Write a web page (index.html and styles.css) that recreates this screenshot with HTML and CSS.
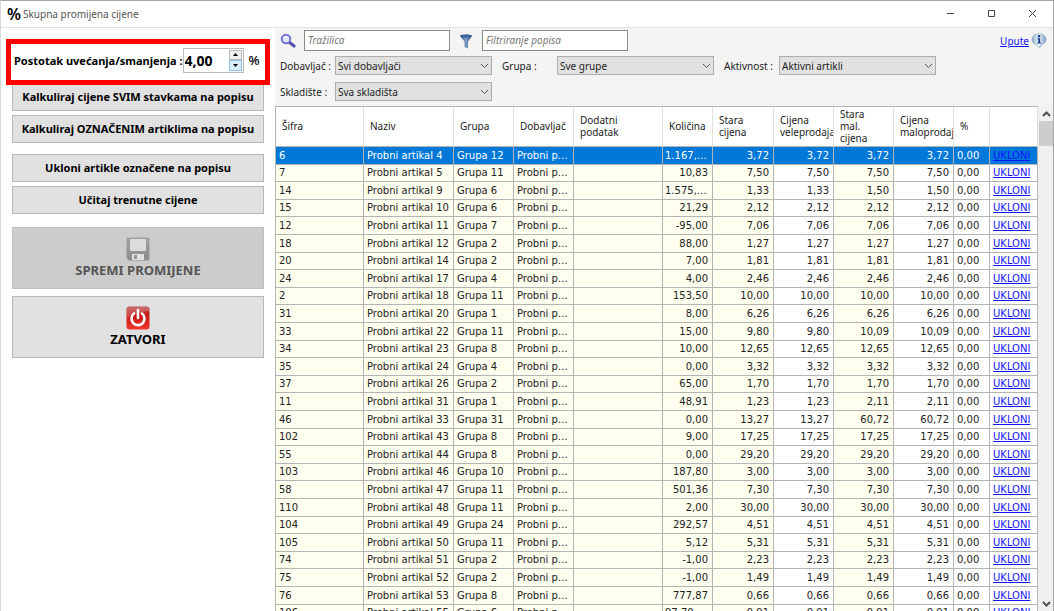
FILE: index.html
```
<!DOCTYPE html>
<html lang="hr">
<head>
  <meta charset="UTF-8" />
  <meta name="viewport" content="width=device-width, initial-scale=1.0"/>
  <title>Skupna promijena cijene</title>
  <link rel="stylesheet" href="styles.css">
</head>
<body>

  <header class="titlebar">
    <span class="app-icon">%</span>
    <h1>Skupna promijena cijene</h1>
    <div class="window-buttons">
      <button type="button" aria-label="Minimiziraj"><svg width="9" height="9" viewBox="0 0 9 9"><path d="M1 4.500h7"/></svg></button>
      <button type="button" aria-label="Maksimiziraj"><svg width="9" height="9" viewBox="0 0 9 9"><path d="M1.500 1.500h6v6h-6z"/></svg></button>
      <button type="button" aria-label="Zatvori prozor"><svg width="9" height="9" viewBox="0 0 9 9"><path d="M1 1l7 7M8 1l-7 7"/></svg></button>
    </div>
  </header>

  <div class="layout">
    <!-- Actions -->
    <aside class="sidebar">
      <div class="percent">
        <label for="percent">Postotak uvećanja/smanjenja :</label>
        <div class="spinner">
          <input id="percent" type="text" value="4,00" />
          <div class="spin-buttons">
            <button type="button" id="up" aria-label="Povećaj"><svg width="5" height="3" viewBox="0 0 5 3"><path d="M0 3l2.500-3L5 3z"/></svg></button>
            <button type="button" id="down" class="active" aria-label="Smanji"><svg width="5" height="3" viewBox="0 0 5 3"><path d="M0 0l2.500 3L5 0z"/></svg></button>
          </div>
        </div>
        <span class="unit">%</span>
      </div>

      <div class="actions">
        <button type="button" class="btn">Kalkuliraj cijene SVIM stavkama na popisu</button>
        <button type="button" class="btn">Kalkuliraj OZNAČENIM artiklima na popisu</button>
      </div>
      <div class="actions">
        <button type="button" class="btn">Ukloni artikle označene na popisu</button>
        <button type="button" class="btn">Učitaj trenutne cijene</button>
      </div>
      <div class="actions actions-large">
        <button type="button" class="btn btn-large" disabled>
          <svg width="24" height="24" viewBox="0 0 24 24">
            <defs>
              <linearGradient id="disk" x1="0" y1="0" x2="0" y2="1">
                <stop offset="0" stop-color="#a2a2a2"/><stop offset="1" stop-color="#8c8c8c"/>
              </linearGradient>
            </defs>
            <path d="M2 .5h20q1.500 0 1.500 1.500v20q0 1.500-1.500 1.500H3L.5 21V2Q.5.5 2 .5z" fill="url(#disk)"/>
            <path d="M4 2h16v11q0 1-1 1H5q-1 0-1-1z" fill="#dcdcdc"/>
            <path d="M6 17h12v6H6z" fill="#e0e0e0"/>
            <path d="M8 18h3v4H8z" fill="#969696"/>
          </svg>
          SPREMI PROMIJENE
        </button>
        <button type="button" class="btn btn-large">
          <svg width="24" height="24" viewBox="0 0 24 24">
            <defs>
              <linearGradient id="power" x1="0" y1="0" x2="0" y2="1">
                <stop offset="0" stop-color="#b84a4a"/><stop offset=".4" stop-color="#c81414"/><stop offset="1" stop-color="#f03a2c"/>
              </linearGradient>
            </defs>
            <rect x=".5" y=".5" width="23" height="23" rx="3" fill="url(#power)"/>
            <path d="M1 9V3q0-2 2-2h18q2 0 2 2v2Q14 5 1 12z" fill="#fff" opacity=".2"/>
            <path d="M8 7.500a6.500 6.500 0 1 0 8 0" fill="none" stroke="#fff" stroke-width="2.600" stroke-linecap="round"/>
            <path d="M12 4v8" stroke="#fff" stroke-width="2.600" stroke-linecap="round"/>
          </svg>
          ZATVORI
        </button>
      </div>
    </aside>

    <main class="content">
      <!-- Search and filters -->
      <div class="search-row">
        <svg width="16" height="16" viewBox="0 0 16 16">
          <path d="M9 9l5 4" stroke="#5553b4" stroke-width="3.200" stroke-linecap="round"/>
          <circle cx="6" cy="6" r="4.300" fill="#dfe6ff" stroke="#7472d2" stroke-width="2"/>
          <path d="M4 5.500Q4.500 4 6.500 4" fill="none" stroke="#fff"/>
        </svg>
        <input type="text" placeholder="Tražilica" aria-label="Tražilica" />
        <svg width="16" height="16" viewBox="0 0 16 16">
          <defs>
            <linearGradient id="funnel"><stop offset="0" stop-color="#24406e"/><stop offset=".5" stop-color="#7f9fc8"/><stop offset="1" stop-color="#1f3a68"/></linearGradient>
          </defs>
          <path d="M2 3l4.500 5.500V14l3.500 1.500V8.500L14 3z" fill="url(#funnel)"/>
          <ellipse cx="8" cy="2.800" rx="6" ry="1.600" fill="#3f6299"/>
        </svg>
        <input type="text" placeholder="Filtriranje popisa" aria-label="Filtriranje popisa" />
        <a href="#" class="help">Upute
          <svg width="16" height="16" viewBox="0 0 16 16">
            <defs>
              <linearGradient id="bubble" x1="0" x2="1"><stop offset="0" stop-color="#7fa9c8"/><stop offset=".45" stop-color="#f4fbff"/><stop offset="1" stop-color="#7d9dc0"/></linearGradient>
            </defs>
            <path d="M8 .8c4 0 7 2.300 7 5.700 0 2.800-1.900 4.700-4.800 5.500L8.500 15 6.300 12.200C3 11.500 1 9.400 1 6.500 1 3.100 4 .8 8 .8z" fill="url(#bubble)" stroke="#8aa6bf" stroke-width=".7"/>
            <circle cx="8" cy="3.200" r="1.300" fill="#173f91"/>
            <path d="M6.300 5.300h2.800v4.200h1v1H6.200v-1h1V6.300h-.9z" fill="#173f91"/>
          </svg>
        </a>
      </div>

      <div class="filters">
        <div class="field">
          <label for="supplier">Dobavljač :</label>
          <div class="select">
            <select id="supplier"><option>Svi dobavljači</option></select>
            <svg width="9" height="6" viewBox="0 0 9 6"><path d="M1 1l3.500 3.500L8 1"/></svg>
          </div>
        </div>
        <div class="field">
          <label for="group">Grupa :</label>
          <div class="select">
            <select id="group"><option>Sve grupe</option></select>
            <svg width="9" height="6" viewBox="0 0 9 6"><path d="M1 1l3.500 3.500L8 1"/></svg>
          </div>
        </div>
        <div class="field">
          <label for="activity">Aktivnost :</label>
          <div class="select">
            <select id="activity"><option>Aktivni artikli</option></select>
            <svg width="9" height="6" viewBox="0 0 9 6"><path d="M1 1l3.500 3.500L8 1"/></svg>
          </div>
        </div>
        <div class="field">
          <label for="warehouse">Skladište :</label>
          <div class="select">
            <select id="warehouse"><option>Sva skladišta</option></select>
            <svg width="9" height="6" viewBox="0 0 9 6"><path d="M1 1l3.500 3.500L8 1"/></svg>
          </div>
        </div>
      </div>

      <!-- Price list -->
      <div class="list">
        <div class="table-wrap">
          <table>
            <colgroup>
              <col class="w-code"><col class="w-name"><col class="w-mid"><col class="w-mid"><col class="w-extra"><col class="w-qty">
              <col class="w-price"><col class="w-mid"><col class="w-mid"><col class="w-mid"><col class="w-pct"><col class="w-link">
            </colgroup>
            <thead>
              <tr>
                <th>Šifra</th>
                <th>Naziv</th>
                <th>Grupa</th>
                <th>Dobavljač</th>
                <th>Dodatni<br>podatak</th>
                <th>Količina</th>
                <th>Stara<br>cijena</th>
                <th>Cijena<br>veleprodaja</th>
                <th>Stara<br>mal.<br>cijena</th>
                <th>Cijena<br>maloprodaja</th>
                <th>%</th>
                <th></th>
              </tr>
            </thead>
            <tbody id="rows"></tbody>
          </table>
        </div>
        <div class="scrollbar">
          <button type="button" aria-label="Gore"><svg width="9" height="6" viewBox="0 0 9 6"><path d="M1 5l3.500-3.500L8 5"/></svg></button>
          <div class="thumb"></div>
          <button type="button" aria-label="Dolje"><svg width="9" height="6" viewBox="0 0 9 6"><path d="M1 1l3.500 3.500L8 1"/></svg></button>
        </div>
      </div>
    </main>
  </div>

  <script>
    // code, item number, group, quantity, wholesale price, retail price
    const items = [
      [6, 4, 12, '1.167,00', '3,72', '3,72'],
      [7, 5, 11, '10,83', '7,50', '7,50'],
      [14, 9, 6, '1.575,00', '1,33', '1,50'],
      [15, 10, 6, '21,29', '2,12', '2,12'],
      [12, 11, 7, '-95,00', '7,06', '7,06'],
      [18, 12, 2, '88,00', '1,27', '1,27'],
      [20, 14, 2, '7,00', '1,81', '1,81'],
      [24, 17, 4, '4,00', '2,46', '2,46'],
      [2, 18, 11, '153,50', '10,00', '10,00'],
      [31, 20, 1, '8,00', '6,26', '6,26'],
      [33, 22, 11, '15,00', '9,80', '10,09'],
      [34, 23, 8, '10,00', '12,65', '12,65'],
      [35, 24, 4, '0,00', '3,32', '3,32'],
      [37, 26, 2, '65,00', '1,70', '1,70'],
      [11, 31, 1, '48,91', '1,23', '2,11'],
      [46, 33, 31, '0,00', '13,27', '60,72'],
      [102, 43, 8, '9,00', '17,25', '17,25'],
      [55, 44, 8, '0,00', '29,20', '29,20'],
      [103, 46, 10, '187,80', '3,00', '3,00'],
      [58, 47, 11, '501,36', '7,30', '7,30'],
      [110, 48, 11, '2,00', '30,00', '30,00'],
      [104, 49, 24, '292,57', '4,51', '4,51'],
      [105, 50, 11, '5,12', '5,31', '5,31'],
      [74, 51, 2, '-1,00', '2,23', '2,23'],
      [75, 52, 2, '-1,00', '1,49', '1,49'],
      [76, 53, 8, '777,87', '0,66', '0,66'],
      [106, 55, 6, '97,70667', '0,91', '0,91']
    ];

    document.getElementById('rows').innerHTML = items.map(([code, item, group, qty, wholesale, retail], i) => `
      <tr${i === 0 ? ' class="selected"' : ''}>
        <td>${code}</td>
        <td>Probni artikal ${item}</td>
        <td>Grupa ${group}</td>
        <td>Probni partner</td>
        <td></td>
        <td class="num">${qty}</td>
        <td class="num">${wholesale}</td>
        <td class="num edit">${wholesale}</td>
        <td class="num">${retail}</td>
        <td class="num edit">${retail}</td>
        <td class="edit">0,00</td>
        <td class="edit"><a href="#">UKLONI</a></td>
      </tr>`).join('');

    const percent = document.getElementById('percent');

    function step(amount) {
      const value = parseFloat(percent.value.replace(',', '.')) || 0;
      percent.value = (value + amount).toFixed(2).replace('.', ',');
    }

    document.getElementById('up').addEventListener('click', () => step(1));
    document.getElementById('down').addEventListener('click', () => step(-1));
  </script>
</body>
</html>
```
FILE: styles.css
```
* {
  box-sizing: border-box;
}

/* General styling */
body {
  font-family: 'Noto Sans', 'Open Sans', sans-serif;
  font-size: 10px;
  color: #222;
  margin: 0;
  height: 100vh;
  display: flex;
  flex-direction: column;
  background: #fff;
  border: 1px solid #a6a6a6;
  border-left-color: #d8d8d8;
  border-bottom: 0;
  overflow: hidden;
}

button,
input,
select {
  font-family: inherit;
  font-size: inherit;
  color: inherit;
  margin: 0;
}

svg {
  flex: none;
}

/* Title bar */
.titlebar {
  display: flex;
  align-items: center;
  height: 27px;
  flex: none;
  padding-left: 6px;
  border-bottom: 1px solid #e0e0e0;
}

.app-icon {
  font-size: 16px;
  font-weight: 600;
  color: #000;
}

.titlebar h1 {
  margin: 0 0 0 2px;
  font-size: 10px;
  font-weight: normal;
  color: #555;
}

.window-buttons {
  display: flex;
  margin-left: auto;
}

.window-buttons button {
  width: 41px;
  height: 26px;
  padding: 0;
  border: 0;
  background: none;
}

.window-buttons svg {
  fill: none;
  stroke: #444;
}

.layout {
  display: flex;
  flex: 1;
  min-height: 0;
}

/* Left panel */
.sidebar {
  width: 274px;
  flex: none;
  padding: 11px 5px;
}

.percent {
  position: relative;
  z-index: 1;
  display: flex;
  align-items: center;
  height: 46px;
  padding: 0 4px 4px 3px;
  border: 5px solid #f00;
  background: #fff;
  font-size: 11px;
  font-weight: bold;
  color: #000;
}

.percent label {
  white-space: nowrap;
}

.spinner {
  display: flex;
  width: 61px;
  height: 25px;
  padding: 1px;
  border: 1px solid #bbb;
}

.spinner input {
  flex: 1;
  min-width: 0;
  padding: 0;
  border: 0;
  outline: 0;
  font-size: 14px;
  font-weight: bold;
}

.spin-buttons {
  display: flex;
  flex-direction: column;
  width: 13px;
}

.spin-buttons button {
  display: flex;
  align-items: center;
  justify-content: center;
  flex: 1;
  padding: 0;
  border: 1px solid #bbb;
  background: #eee;
}

.spin-buttons .active {
  border-color: #8ec0ea;
  background: #d8ebfb;
}

.unit {
  margin-left: 5px;
  font-size: 13px;
  font-weight: 500;
}

.actions {
  display: flex;
  flex-direction: column;
  gap: 4px;
  padding: 0 6px;
  margin-bottom: 11px;
}

.percent + .actions {
  margin-top: -2px;
}

.btn {
  height: 28px;
  padding: 0 0 2px;
  border: 1px solid #b8b8b8;
  background: #e1e1e1;
  font-size: 11px;
  font-weight: bold;
  color: #000;
  white-space: nowrap;
}

.actions-large {
  gap: 7px;
  margin-top: 13px;
}

.btn-large {
  display: flex;
  flex-direction: column;
  align-items: center;
  justify-content: center;
  height: 62px;
  padding: 0;
  font-size: 13px;
}

.btn:disabled {
  border-color: #bfbfbf;
  background: #ccc;
  color: #555;
}

/* Right panel */
.content {
  display: flex;
  flex-direction: column;
  flex: 1;
  min-width: 0;
  background: #f4f4f4;
}

.search-row {
  display: flex;
  align-items: center;
  gap: 8px;
  padding: 2px 6px 0 5px;
}

.search-row input {
  width: 146px;
  height: 21px;
  padding: 0 3px 2px;
  border: 1px solid #8a8a8a;
  background: #fff;
}

.search-row input::placeholder {
  color: #777;
  font-style: italic;
}

.help {
  display: flex;
  align-items: center;
  gap: 2px;
  margin-left: auto;
  color: #1414ff;
}

.filters {
  display: grid;
  grid-template-columns: repeat(3, minmax(0, 212px));
  gap: 7px 10px;
  padding: 5px;
}

.field {
  display: flex;
  align-items: center;
}

.field label {
  width: 55px;
  flex: none;
}

.select {
  display: grid;
  align-items: center;
  flex: 1;
  min-width: 0;
}

.select select {
  grid-area: 1 / 1;
  appearance: none;
  width: 100%;
  height: 19px;
  padding: 0 2px;
  border: 1px solid #adadad;
  border-radius: 0;
  background: #e1e1e1;
}

.select svg {
  grid-area: 1 / 1;
  justify-self: end;
  margin-right: 3px;
  fill: none;
  stroke: #555;
  pointer-events: none;
}

/* Table */
.list {
  display: flex;
  flex: 1;
  min-height: 0;
}

.table-wrap {
  flex: 1;
  min-width: 0;
  overflow: hidden;
  background: #fff;
}

table {
  width: 100%;
  table-layout: fixed;
  border-collapse: separate;
  border-spacing: 0;
  border-top: 1px solid #b4b4b4;
  border-left: 1px solid #b4b4b4;
}

.w-code { width: 88px; }
.w-name { width: 90px; }
.w-mid { width: 60px; }
.w-price { width: 61px; }
.w-extra { width: 89px; }
.w-qty { width: 50px; }
.w-pct { width: 36px; }
.w-link { width: 48px; }

th {
  height: 40px;
  padding: 0 0 2px 6px;
  border-right: 1px solid #e0e0e0;
  border-bottom: 1px solid #b4b4b4;
  font-weight: normal;
  line-height: 12px;
  text-align: left;
  overflow: hidden;
}

td {
  height: 18px;
  padding: 0 2px 0 3px;
  border-right: 1px solid #b4b4b4;
  border-bottom: 1px solid #b4b4b4;
  background: #ffffef;
  font-family: 'DejaVu Sans', sans-serif;
  line-height: 14px;
  white-space: nowrap;
  overflow: hidden;
  text-overflow: ellipsis;
}

tr:nth-child(5n + 2) td,
tr:nth-child(5n + 4) td {
  height: 17px;
}

.num {
  padding: 0 4px 0 2px;
  text-align: right;
}

.edit {
  background: #fff;
}

td a {
  color: #1414ff;
}

.selected td {
  background: #0078d7;
  color: #fff;
}

/* Scrollbar */
.scrollbar {
  display: flex;
  flex-direction: column;
  width: 15px;
  padding-left: 1px;
  background: #f0f0f0;
}

.scrollbar button {
  height: 15px;
  padding: 0;
  border: 0;
  background: none;
}

.scrollbar button:last-child {
  margin-top: auto;
}

.scrollbar svg {
  display: block;
  margin: auto;
  fill: none;
  stroke: #505050;
  stroke-width: 2;
}

.thumb {
  height: 25px;
  background: #cdcdcd;
}
```
